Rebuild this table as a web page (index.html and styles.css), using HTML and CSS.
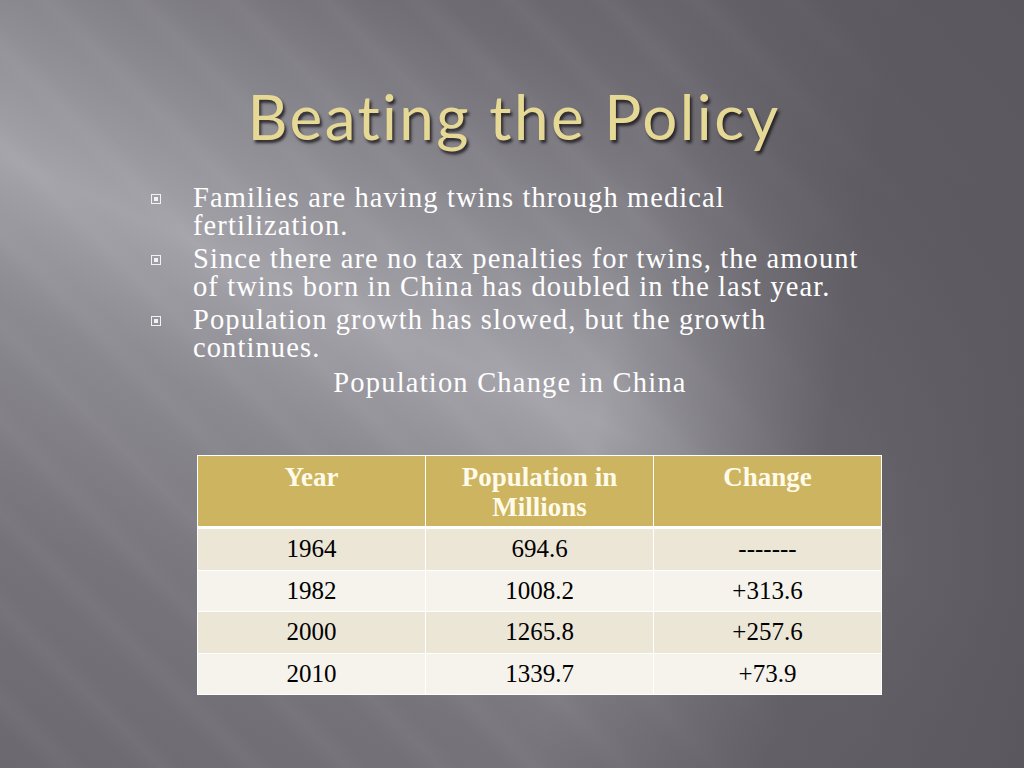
FILE: index.html
```html
<!DOCTYPE html>
<html>
<head>
<meta charset="utf-8">
<link rel="stylesheet" href="styles.css">
</head>
<body>
<div class="slide">
  <h1 class="title">Beating the Policy</h1>
  <ul class="bullets">
    <li class="item"><span class="mark"><span class="mark-dot"></span></span><span class="text">Families are having twins through medical fertilization.</span></li>
    <li class="item"><span class="mark"><span class="mark-dot"></span></span><span class="text">Since there are no tax penalties for twins, the amount of twins born in China has doubled in the last year.</span></li>
    <li class="item"><span class="mark"><span class="mark-dot"></span></span><span class="text">Population growth has slowed, but the growth continues.</span></li>
  </ul>
  <p class="caption">Population Change in China</p>
  <table class="data">
    <thead>
      <tr><th>Year</th><th>Population in Millions</th><th>Change</th></tr>
    </thead>
    <tbody>
      <tr class="odd"><td>1964</td><td>694.6</td><td>-------</td></tr>
      <tr class="even"><td>1982</td><td>1008.2</td><td>+313.6</td></tr>
      <tr class="odd"><td>2000</td><td>1265.8</td><td>+257.6</td></tr>
      <tr class="even"><td>2010</td><td>1339.7</td><td>+73.9</td></tr>
    </tbody>
  </table>
</div>
</body>
</html>
```
FILE: styles.css
```css
html, body {
  margin: 0;
  padding: 0;
}
.slide {
  width: 1024px;
  height: 768px;
  overflow: hidden;
  box-sizing: border-box;
  padding-top: 78px;
  background:
    linear-gradient(100deg, rgba(90,88,94,0) 0%, rgba(90,88,94,0) 58%, rgba(90,88,94,0.8) 78%, rgba(90,88,94,1) 100%),
    repeating-linear-gradient(45deg, rgba(255,255,255,0) 0px, rgba(255,255,255,0) 30px, rgba(255,255,255,0.03) 48px, rgba(255,255,255,0) 66px),
    linear-gradient(204deg, #5c5a60 0%, #6f6d73 22%, #8b8990 37%, #a5a3aa 50%, #8c8a91 62%, #76747a 80%, #6b696f 100%);
  font-family: "Liberation Serif", "Times New Roman", serif;
  color: #ffffff;
}
.title {
  margin: 0;
  text-align: center;
  padding-left: 4px;
  font-family: Lato, "Open Sans", sans-serif;
  font-weight: 400;
  font-size: 62px;
  line-height: 76px;
  letter-spacing: 2.4px;
  color: #e6d895;
  text-shadow: 2px 3px 3px rgba(20,18,22,0.8);
}
.bullets {
  list-style: none;
  margin: 30px 0 0 0;
  padding: 0 0 0 151px;
}
.item {
  display: flex;
  align-items: flex-start;
  margin-bottom: 5px;
}
.mark {
  flex: none;
  width: 8px;
  height: 8px;
  margin-top: 10px;
  margin-right: 32px;
  border: 1px solid #f2f2f2;
  display: flex;
  align-items: center;
  justify-content: center;
}
.mark-dot {
  width: 4px;
  height: 4px;
  background: #f2f2f2;
}
.text {
  width: 676px;
  font-size: 28.5px;
  line-height: 28px;
  letter-spacing: 1.1px;
}
.caption {
  margin: 4px 0 0 0;
  padding-right: 4px;
  text-align: center;
  font-size: 28.5px;
  line-height: 32px;
  letter-spacing: 1.2px;
}
.data {
  margin: 56px 0 0 197px;
  width: 685px;
  border-collapse: collapse;
  table-layout: fixed;
  font-size: 25px;
  color: #000000;
}
.data th, .data td {
  border: 1px solid #ffffff;
  text-align: center;
  padding: 0;
}
.data th {
  background: #ccb460;
  color: #fffbe8;
  font-weight: 700;
  font-size: 27px;
  vertical-align: top;
  height: 72px;
  line-height: 30px;
  padding-top: 6px;
  box-sizing: border-box;
  border-bottom: 3px solid #ffffff;
}
.data td {
  height: 40.5px;
  line-height: 40px;
}
.odd td {
  background: #ece6d7;
}
.even td {
  background: #f5f3ec;
}
```
